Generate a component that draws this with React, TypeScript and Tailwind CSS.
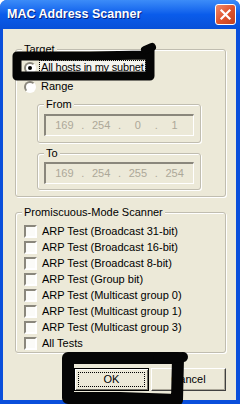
import React from 'react'

const font = { fontFamily: '"Liberation Sans", Arial, sans-serif' }

type IpBoxProps = { octets: string[] }

const IpBox: React.FC<IpBoxProps> = ({ octets }) => (
    <div className="ml-[6px] w-[150px] h-[22px] flex items-center border-t-2 border-l-2 border-b border-r border-t-[#8a877c] border-l-[#8a877c] border-b-white border-r-white bg-[#ECE9D8] text-[11px] text-[#ACA899]">
        {octets.map((o, i) => (
            <React.Fragment key={i}>
                <span className="flex-1 text-center">{o}</span>
                {i < octets.length - 1 && (
                    <span className="w-0 flex justify-center">.</span>
                )}
            </React.Fragment>
        ))}
    </div>
)

const Radio: React.FC<{ checked?: boolean; label: string; focus?: boolean }> = ({
    checked,
    label,
    focus,
}) => (
    <div className="flex items-center h-[13px] ml-[8px]">
        <span className="w-[12px] h-[12px] rounded-full border-2 border-t-[#8a877c] border-l-[#8a877c] border-b-white border-r-white bg-white flex items-center justify-center">
            {checked && <span className="w-[4px] h-[4px] rounded-full bg-black" />}
        </span>
        <span
            className={
                'ml-[4px] px-[1px] leading-[13px] ' +
                (focus ? 'outline outline-1 outline-dotted outline-black bg-[#f4f3ee] tracking-[-0.2px]' : '')
            }
        >
            {label}
        </span>
    </div>
)

const Check: React.FC<{ label: string }> = ({ label }) => (
    <div className="flex items-center h-[16px] ml-[8px]">
        <span className="w-[13px] h-[13px] border-2 border-t-[#8a877c] border-l-[#8a877c] border-b-white border-r-white bg-[#fbfbf8]" />
        <span className="ml-[5px] leading-[13px]">{label}</span>
    </div>
)

const GroupBox: React.FC<{ title: string; className?: string; children: React.ReactNode }> = ({
    title,
    className,
    children,
}) => (
    <fieldset
        className={
            'border border-[#c0bdb0] rounded-[3px] shadow-[inset_1px_1px_0_#ffffff,1px_1px_0_#ffffff] ' +
            (className || '')
        }
    >
        <legend className="ml-[6px] px-[2px] leading-[13px] bg-[#ECE9D8]">{title}</legend>
        {children}
    </fieldset>
)

const tests = [
    'ARP Test (Broadcast 31-bit)',
    'ARP Test (Broadcast 16-bit)',
    'ARP Test (Broadcast 8-bit)',
    'ARP Test (Group bit)',
    'ARP Test (Multicast group 0)',
    'ARP Test (Multicast group 1)',
    'ARP Test (Multicast group 3)',
    'All Tests',
]

const App: React.FC = () => {
    return (
        <div className="relative w-[240px] h-[404px] bg-white overflow-hidden" style={font}>
            <div className="flex flex-col h-full rounded-t-[7px] bg-[#0A4FDB] overflow-hidden">
                {/* title bar */}
                <div className="h-[29px] flex items-center justify-between pl-[7px] pr-[4px] bg-gradient-to-b from-[#3C8CF8] via-[#0A5CEB] to-[#0850D8]">
                    <span className="text-white font-bold text-[12.5px] [text-shadow:1px_1px_0_#0a1f7a]">
                        MAC Address Scanner
                    </span>
                    <div className="w-[21px] h-[21px] rounded-[3px] border border-white bg-gradient-to-br from-[#EE8A6C] via-[#E0542E] to-[#C2421E] flex items-center justify-center">
                        <svg width="13" height="13" viewBox="0 0 13 13">
                            <path d="M2.5 2.5 L10.5 10.5 M10.5 2.5 L2.5 10.5" stroke="white" strokeWidth="2.2" strokeLinecap="square" />
                        </svg>
                    </div>
                </div>

                {/* client area */}
                <div className="flex-1 ml-[3px] mr-[4px] mb-[4px] bg-[#ECE9D8] flex flex-col pl-[12px] pr-[10px] pt-[14px] text-[11px] text-black">
                    <GroupBox title="Target" className="pb-[6px]">
                        <div className="flex flex-col gap-[6px] pt-[5px]">
                            <Radio checked focus label="All hosts in my subnet" />
                            <Radio label="Range" />
                        </div>
                        <GroupBox title="From" className="ml-[21px] w-[164px] mt-[5px] pb-[6px]">
                            <div className="mt-[3px]">
                                <IpBox octets={['169', '254', '0', '1']} />
                            </div>
                        </GroupBox>
                        <GroupBox title="To" className="ml-[21px] w-[164px] mt-[4px] pb-[5px]">
                            <div className="mt-[2px]">
                                <IpBox octets={['169', '254', '255', '254']} />
                            </div>
                        </GroupBox>
                    </GroupBox>

                    <GroupBox title="Promiscuous-Mode Scanner" className="mt-[9px] pt-[4px] pb-[1px]">
                        {tests.map((t) => (
                            <Check key={t} label={t} />
                        ))}
                    </GroupBox>

                    <div className="flex justify-end gap-[2px] mt-[15px]">
                        <button className="w-[75px] h-[23px] border border-black bg-[#ECE9D8] shadow-[inset_1px_1px_0_#ffffff,inset_-1px_-1px_0_#716F64] flex items-center justify-center p-[3px]">
                            <span className="w-full h-full flex items-center justify-center outline outline-1 outline-dotted outline-black -outline-offset-1">
                                OK
                            </span>
                        </button>
                        <button className="w-[75px] h-[23px] border border-t-white border-l-white border-b-[#404040] border-r-[#404040] bg-[#ECE9D8] shadow-[inset_-1px_-1px_0_#ACA899] flex items-center justify-center">
                            Cancel
                        </button>
                    </div>
                </div>
            </div>

            {/* marker annotations drawn over the dialog */}
            <svg className="absolute inset-0 pointer-events-none" width="240" height="404" viewBox="0 0 240 404">
                <g fill="none" stroke="#050505" strokeLinecap="round" strokeLinejoin="round">
                    <path d="M17 56 L90 56 L147 55 L150 49 L150 76 L90 76 L17 76 Z" strokeWidth="9" />
                    <path d="M145 50 L152 47" strokeWidth="8" />
                    <path d="M68 358 L120 358 L178 358 L177 400 L120 398 L68 398 Z" strokeWidth="12" />
                    <path d="M158 358 L183 357" strokeWidth="10" />
                </g>
            </svg>
        </div>
    )
}

export default App
